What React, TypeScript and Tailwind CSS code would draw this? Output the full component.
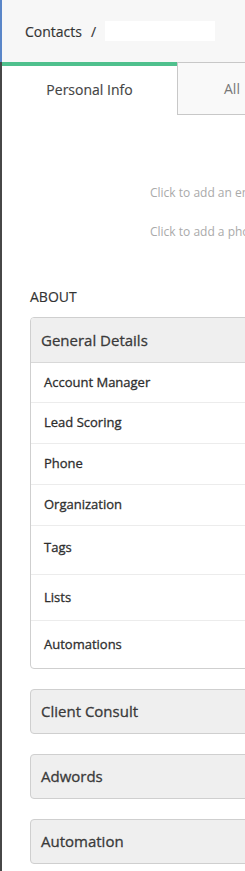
import React from "react";

const rows = [
  { label: "Account Manager", h: "h-[40px]" },
  { label: "Lead Scoring", h: "h-[41px]" },
  { label: "Phone", h: "h-[41px]" },
  { label: "Organization", h: "h-[41px]" },
  { label: "Tags", h: "h-[49px]", top: true },
  { label: "Lists", h: "h-[46px]" },
  { label: "Automations", h: "h-[47px]" },
];

function Section({ title }: { title: string }) {
  return (
    <div className="w-[400px] h-[45px] rounded-[4px] border border-[#cfcfcf] bg-[#efefef] flex items-center pl-[10px] text-[15px] text-[#3a3a3a] [-webkit-text-stroke:0.3px]">
      {title}
    </div>
  );
}

export default function App() {
  return (
    <div
      className="w-[245px] h-[871px] overflow-hidden flex bg-white"
      style={{ fontFamily: '"Open Sans", "Noto Sans", sans-serif' }}
    >
      <div className="w-[2px] shrink-0 flex flex-col">
        <div className="h-[62px] bg-[#5a86c8]" />
        <div className="flex-1 bg-[#474747]" />
      </div>
      <div className="flex-1 min-w-0 flex flex-col overflow-hidden">
        <div className="h-[62px] shrink-0 bg-[#f7f7f7] flex items-center pl-[23px] text-[14px] text-[#333] [-webkit-text-stroke:0.15px]">
          <span>Contacts</span>
          <span className="ml-[9px]">/</span>
          <div className="ml-[9px] w-[110px] h-[20px] bg-white" />
        </div>
        <div className="flex h-[53px] shrink-0">
          <div className="w-[175px] shrink-0 border-t-4 border-[#4fc08d] bg-white flex items-center justify-center text-[14px] text-[#444] pb-[2px] [-webkit-text-stroke:0.15px]">
            Personal Info
          </div>
          <div className="w-[200px] shrink-0 border-l border-b border-t border-[#c8c8c8] bg-[#f9f9f9] flex items-center pl-[46px] text-[14px] text-[#777]">
            All
          </div>
        </div>
        <div className="h-[70px] shrink-0" />
        <div className="pl-[148px] text-[12px] text-[#aaa] whitespace-nowrap leading-[16px] overflow-hidden">
          Click to add an email
        </div>
        <div className="h-[23px] shrink-0" />
        <div className="pl-[148px] text-[12px] text-[#aaa] whitespace-nowrap leading-[16px] overflow-hidden">
          Click to add a phone
        </div>
        <div className="h-[48px] shrink-0" />
        <div className="pl-[28px] text-[14px] text-[#333] leading-[18px] [-webkit-text-stroke:0.15px]">ABOUT</div>
        <div className="h-[11px] shrink-0" />
        <div className="pl-[28px] flex flex-col">
          <div className="w-[400px] rounded-[4px] border border-[#cfcfcf] overflow-hidden">
            <div className="h-[45px] bg-[#efefef] border-b border-[#d8d8d8] flex items-center pl-[10px] text-[15px] text-[#3a3a3a] [-webkit-text-stroke:0.3px]">
              General Details
            </div>
            {rows.map((r, i) => (
              <div
                key={r.label}
                className={`${r.h} flex ${r.top ? "items-start pt-[12px]" : "items-center"} pl-[13px] text-[13px] text-[#2e2e2e] [-webkit-text-stroke:0.3px] ${i < rows.length - 1 ? "border-b border-[#ececec]" : ""}`}
              >
                {r.label}
              </div>
            ))}
          </div>
          <div className="h-[20px]" />
          <Section title="Client Consult" />
          <div className="h-[20px]" />
          <Section title="Adwords" />
          <div className="h-[20px]" />
          <Section title="Automation" />
        </div>
      </div>
    </div>
  );
}
